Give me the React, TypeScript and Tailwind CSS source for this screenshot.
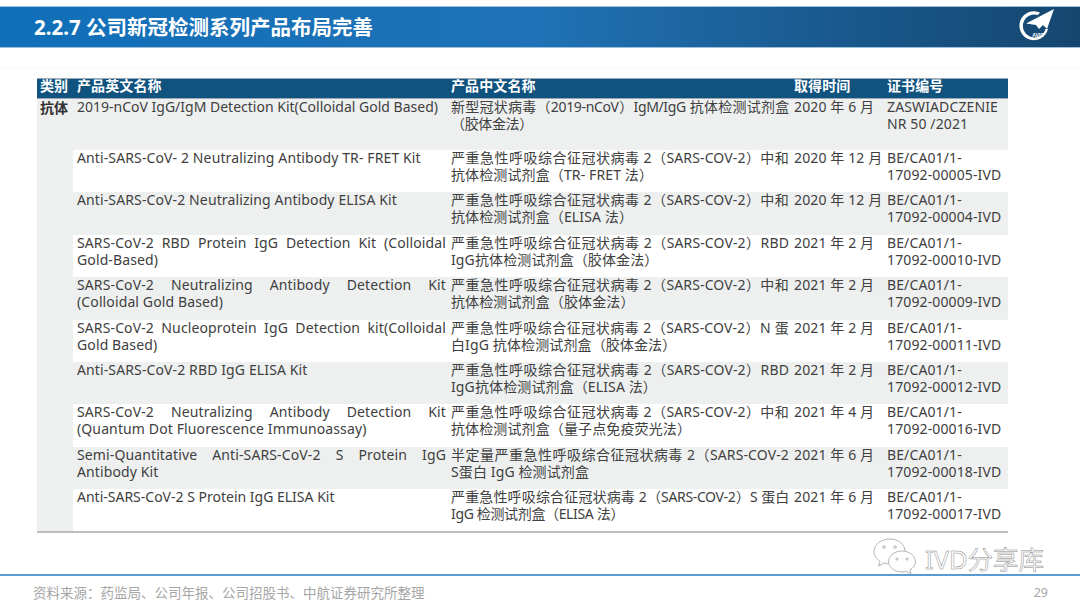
const rows = [
  { en: "2019-nCoV IgG/IgM Detection Kit(Colloidal Gold Based)", cn: ["新型冠状病毒（2019-nCoV）IgM/IgG 抗体检测试剂盒", "（胶体金法）"], date: "2020 年 6 月", cert: ["ZASWIADCZENIE", "NR 50 /2021"], h: "h-[51px]", shade: true, tight: true },
  { en: "Anti-SARS-CoV- 2 Neutralizing Antibody TR- FRET Kit", cn: ["严重急性呼吸综合征冠状病毒 2（SARS-COV-2）中和", "抗体检测试剂盒（TR- FRET 法）"], date: "2020 年 12 月", cert: ["BE/CA01/1-", "17092-00005-IVD"], h: "h-[42px]", shade: false, tight: false },
  { en: "Anti-SARS-CoV-2 Neutralizing Antibody ELISA Kit", cn: ["严重急性呼吸综合征冠状病毒 2（SARS-COV-2）中和", "抗体检测试剂盒（ELISA 法）"], date: "2020 年 12 月", cert: ["BE/CA01/1-", "17092-00004-IVD"], h: "h-[43px]", shade: true, tight: false },
  { en: "SARS-CoV-2 RBD Protein IgG Detection Kit (Colloidal Gold-Based)", cn: ["严重急性呼吸综合征冠状病毒 2（SARS-COV-2）RBD", "IgG抗体检测试剂盒（胶体金法）"], date: "2021 年 2 月", cert: ["BE/CA01/1-", "17092-00010-IVD"], h: "h-[42px]", shade: false, tight: false },
  { en: "SARS-CoV-2 Neutralizing Antibody Detection Kit (Colloidal Gold Based)", cn: ["严重急性呼吸综合征冠状病毒 2（SARS-COV-2）中和", "抗体检测试剂盒（胶体金法）"], date: "2021 年 2 月", cert: ["BE/CA01/1-", "17092-00009-IVD"], h: "h-[43px]", shade: true, tight: false },
  { en: "SARS-CoV-2 Nucleoprotein IgG Detection kit(Colloidal Gold Based)", cn: ["严重急性呼吸综合征冠状病毒 2（SARS-COV-2）N 蛋", "白IgG 抗体检测试剂盒（胶体金法）"], date: "2021 年 2 月", cert: ["BE/CA01/1-", "17092-00011-IVD"], h: "h-[42px]", shade: false, tight: false },
  { en: "Anti-SARS-CoV-2 RBD IgG ELISA Kit", cn: ["严重急性呼吸综合征冠状病毒 2（SARS-COV-2）RBD", "IgG抗体检测试剂盒（ELISA 法）"], date: "2021 年 2 月", cert: ["BE/CA01/1-", "17092-00012-IVD"], h: "h-[42px]", shade: true, tight: false },
  { en: "SARS-CoV-2 Neutralizing Antibody Detection Kit (Quantum Dot Fluorescence Immunoassay)", cn: ["严重急性呼吸综合征冠状病毒 2（SARS-COV-2）中和", "抗体检测试剂盒（量子点免疫荧光法）"], date: "2021 年 4 月", cert: ["BE/CA01/1-", "17092-00016-IVD"], h: "h-[43px]", shade: false, tight: false },
  { en: "Semi-Quantitative Anti-SARS-CoV-2 S Protein IgG Antibody Kit", cn: ["半定量严重急性呼吸综合征冠状病毒 2（SARS-COV-2", "S蛋白 IgG 检测试剂盒"], date: "2021 年 6 月", cert: ["BE/CA01/1-", "17092-00018-IVD"], h: "h-[42px]", shade: true, tight: false },
  { en: "Anti-SARS-CoV-2 S Protein IgG ELISA Kit", cn: ["严重急性呼吸综合征冠状病毒 2（SARS-COV-2）S 蛋白", "IgG 检测试剂盒（ELISA 法）"], date: "2021 年 6 月", cert: ["BE/CA01/1-", "17092-00017-IVD"], h: "h-[42px]", shade: false, tight: true },
];

const Logo = () => (
  <svg width="38" height="38" viewBox="0 0 38 38">
    <path d="M22 4.500A14.500 14.500 0 1 0 30 21L27.500 21A11.500 11.500 0 1 1 20 7Z" fill="#fff" />
    <path d="M36 1 L29 21 L25 17 L21 21 L18 17 L8 15.500 Z" fill="#fff" />
    <text x="20" y="28.500" textAnchor="middle" fill="#fff" fontSize="5" fontWeight="700" fontFamily="Liberation Sans">AVIC</text>
  </svg>
);

const WeChat = () => (
  <svg width="46" height="38" viewBox="0 0 46 38" fill="#fff" stroke="#b5b5b5" strokeWidth="1">
    <path d="M18 1C9 1 2 6.500 2 13.500c0 4 2.500 7.500 6 10l-1.500 4.500 5.500-3c2 .6 4 .9 6 .9 8.500 0 15-5.500 15-12.400S26.500 1 18 1Z" />
    <path d="M30 13c-7.500 0-13.500 4.800-13.500 10.500S22.500 34 30 34c1.500 0 3-.2 4.500-.7l4.500 2.700-1.200-4c3.500-2 5.700-5 5.700-8.500C43 17.800 37.500 13 30 13Z" />
    <circle cx="12" cy="9" r="1.300" /><circle cx="23" cy="9" r="1.300" />
    <circle cx="25" cy="21" r="1.100" /><circle cx="35" cy="21" r="1.100" />
  </svg>
);

export default function App() {
  return (
    <div className="relative h-[607px] w-[1080px] overflow-hidden bg-white pt-[6px] font-['Noto_Sans','Noto_Sans_CJK_SC',sans-serif] text-[#404040]">
      {/* title bar */}
      <div className="flex h-[42px] items-center justify-between border-y border-[#9fc0da] bg-gradient-to-r from-[#0f6fb9] via-[#1f72b5] to-[#15466f] pl-[34px] pr-[24px]">
        <h1 className="text-[20.5px] font-bold text-white">2.2.7 公司新冠检测系列产品布局完善</h1>
        <Logo />
      </div>
      <div className="mt-[19px] h-px bg-[#f8f8f8]" />

      {/* table */}
      <div className="ml-[37px] mt-[10px] w-[971px] border-b-2 border-[#bdbdbd] text-[14px] leading-[17px] tracking-[0.12px]">
        <div className="flex h-[21px] items-center border-y border-[#9aa9b5] bg-[#10537f] pb-[6px] font-bold text-white">
          <div className="w-[36px] pl-[3px]">类别</div>
          <div className="w-[376px] pl-[4px]">产品英文名称</div>
          <div className="w-[343px] pl-[2px]">产品中文名称</div>
          <div className="w-[92px] pl-[2px]">取得时间</div>
          <div className="pl-[3px]">证书编号</div>
        </div>
        <div className="flex">
          <div className="w-[36px] bg-[#eef0f0] pl-[3px] font-bold text-[#333]">抗体</div>
          <div className="flex-1">
            {rows.map((r) => (
              <div key={r.en} className={`flex ${r.h} ${r.shade ? "bg-[#eef0f0]" : "bg-white"}`}>
                <div className={`-mt-px w-[376px] pl-[4px] pr-[3px] text-justify ${r.tight ? "tracking-[0px]" : ""}`}>{r.en}</div>
                <div className={`-mt-px w-[343px] pl-[2px] pr-[3px] ${r.tight ? "tracking-[-0.35px]" : ""}`}>
                  <div className="whitespace-nowrap text-justify [text-align-last:justify]">{r.cn[0]}</div>
                  <div className="whitespace-nowrap">{r.cn[1]}</div>
                </div>
                <div className="-mt-px w-[92px] whitespace-nowrap pl-[2px]">{r.date}</div>
                <div className="-mt-px pl-[3px]">
                  {r.cert.map((c) => (
                    <div key={c}>{c}</div>
                  ))}
                </div>
              </div>
            ))}
          </div>
        </div>
      </div>

      {/* footer */}
      <div className="absolute bottom-0 left-0 right-0 flex h-[33px] items-center justify-between border-t-2 border-[#5b9bd5] pl-[33px] pr-[32px] pt-[4px] text-[13.5px] text-[#a6a6a6]">
        <span>资料来源：药监局、公司年报、公司招股书、中航证券研究所整理</span>
        <span className="text-[12.5px]">29</span>
      </div>

      {/* watermark */}
      <div className="absolute left-[872px] top-[538px] flex items-center gap-[7px]">
        <WeChat />
        <span className="pt-[4px] text-[25.5px] leading-[34px] text-white [-webkit-text-stroke:0.5px_#8a8a8a]">IVD分享库</span>
      </div>
    </div>
  );
}
